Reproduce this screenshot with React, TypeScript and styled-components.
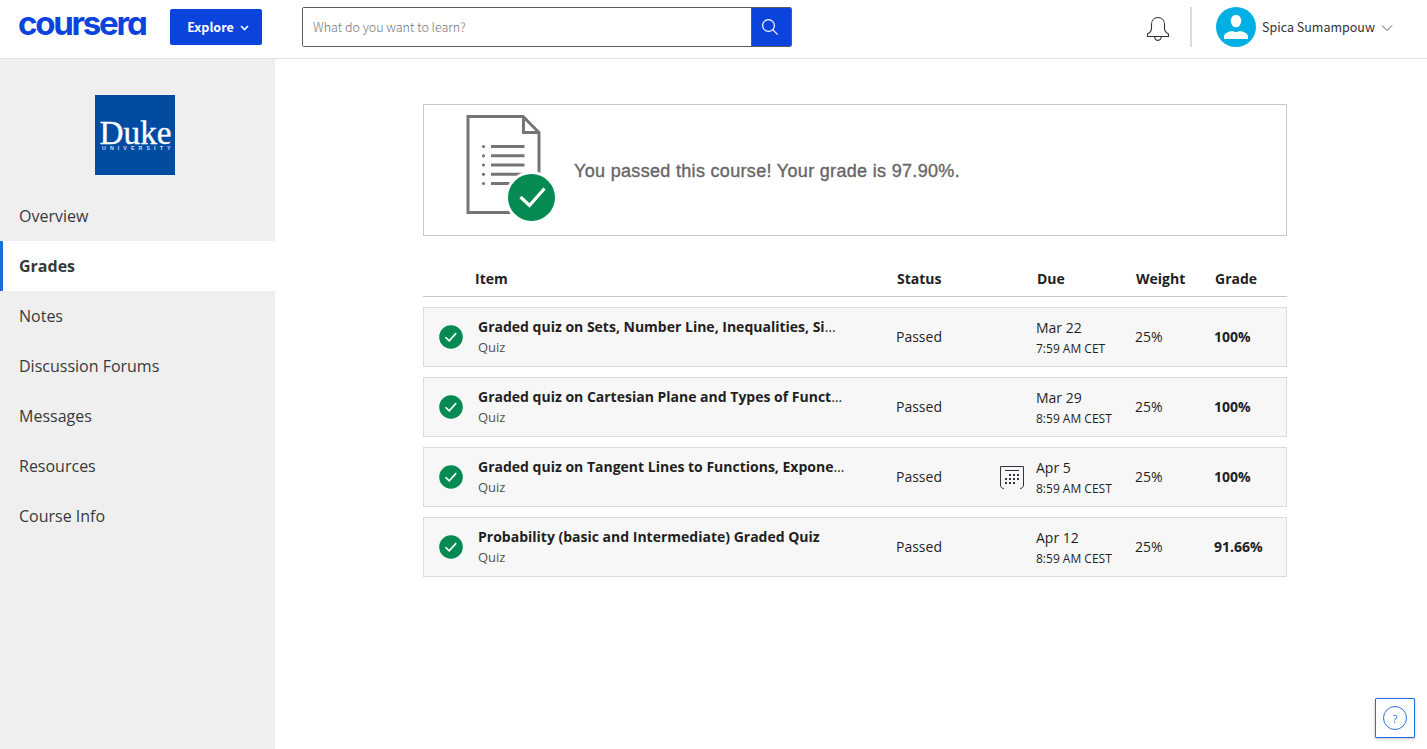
import React from "react";
import styled, { createGlobalStyle } from "styled-components";

const GlobalStyle = createGlobalStyle`
  * { box-sizing: border-box; }
  body {
    margin: 0;
    background: #fff;
    color: #1f1f1f;
    font-family: "Open Sans", "Noto Sans", sans-serif;
    font-size: 14px;
    overflow: hidden;
  }
  button { font: inherit; border: 0; padding: 0; cursor: pointer; }
`;

const sourceSans = `"Noto Sans CJK SC", "Open Sans", sans-serif`;

const Page = styled.div`
  display: flex;
  flex-direction: column;
  height: 749px;
`;

const TopBar = styled.header`
  display: flex;
  height: 59px;
  flex: none;
  border-bottom: 1px solid #e1e1e1;
  font-family: ${sourceSans};
`;

const Logo = styled.svg`
  flex: none;
  overflow: visible;
  text {
    font: 700 32.5px "Inter", sans-serif;
    font-feature-settings: "cv11" 1;
    letter-spacing: -2.2px;
    fill: #0a44dc;
  }
`;

const ExploreButton = styled.button`
  display: flex;
  align-items: center;
  justify-content: center;
  gap: 6px;
  width: 92px;
  height: 36px;
  margin: 9px 0 0 20px;
  padding: 0 0 1px 4px;
  border-radius: 2px;
  background: #0a44dc;
  color: #fff;
  font-size: 12.5px;
  font-weight: 700;
  svg { margin-top: 3px; }
`;

const SearchForm = styled.form`
  display: flex;
  width: 490px;
  height: 40px;
  margin: 7px 0 0 40px;
  border: 1px solid #5c5c5c;
  border-radius: 2px;
  overflow: hidden;
`;

const SearchInput = styled.input`
  flex: 1;
  min-width: 0;
  border: 0;
  outline: 0;
  padding: 0 10px 1px;
  font-family: ${sourceSans};
  font-size: 12.5px;
  font-weight: 300;
  &::placeholder { color: #757575; opacity: 1; }
`;

const SearchButton = styled.button`
  display: flex;
  align-items: center;
  justify-content: center;
  width: 40px;
  padding-right: 3px;
  border-left: 1px solid #5c5c5c;
  background: #0a44dc;
`;

const Account = styled.div`
  display: flex;
  align-items: flex-start;
  margin-left: auto;
  padding: 7px 34px 0 0;
`;

const Bell = styled.svg`
  margin: 9px 20px 0 0;
`;

const Divider = styled.div`
  width: 2px;
  height: 40px;
  margin-right: 24px;
  background: #dcdcdc;
`;

const UserName = styled.div`
  display: flex;
  align-items: center;
  gap: 6px;
  height: 39px;
  margin-left: 6px;
  font-size: 12.5px;
  color: #333;
  svg { margin-top: 2px; }
`;

const Body = styled.div`
  display: flex;
  flex: 1;
  min-height: 0;
`;

const Sidebar = styled.aside`
  display: flex;
  flex-direction: column;
  width: 275px;
  padding-top: 36px;
  background: #efefef;
`;

const SchoolLogo = styled.svg`
  margin: 0 0 16px 95px;
`;

const NavItem = styled.a<{ $active?: boolean }>`
  display: flex;
  align-items: center;
  height: 50px;
  padding-left: ${(p) => (p.$active ? 16 : 19)}px;
  border-left: ${(p) => (p.$active ? "3px solid #1a6bdc" : "0")};
  background: ${(p) => (p.$active ? "#fff" : "transparent")};
  color: #373a3c;
  font-size: 16px;
  font-weight: ${(p) => (p.$active ? 700 : 400)};
`;

const Main = styled.main`
  width: 864px;
  margin: 45px 0 0 148px;
`;

const Banner = styled.section`
  display: flex;
  height: 132px;
  border: 1px solid #c9c9c9;
`;

const BannerIcon = styled.svg`
  margin: 10px 18px 0 42px;
`;

const BannerText = styled.h1`
  margin: 0;
  padding-top: 55px;
  font: 400 18px/22px "Liberation Sans", sans-serif;
  letter-spacing: 0.32px;
  color: #666;
  -webkit-text-stroke: 0.35px #666;
`;

const TableHead = styled.div`
  display: grid;
  grid-template-columns: 52px 422px 105px 35px 99px 79px 1fr;
  align-items: center;
  height: 61px;
  padding-top: 25px;
  border-bottom: 1px solid #c9c9c9;
  font-weight: 700;
`;

const HeadCell = styled.div<{ $column: number }>`
  grid-column: ${(p) => p.$column};
`;

const Row = styled.div`
  display: grid;
  grid-template-columns: 15px 39px 418px 104px 36px 99px 79px 1fr;
  align-items: center;
  height: 60px;
  margin-top: 10px;
  border: 1px solid #dcdcdc;
  background: #f7f7f7;
`;

const Stack = styled.div`
  display: flex;
  flex-direction: column;
`;

const ItemTitle = styled.div`
  line-height: 20px;
  white-space: nowrap;
  b { font-weight: 700; }
`;

const ItemKind = styled.div`
  font-size: 13px;
  line-height: 20px;
  color: #525252;
`;

const DueDate = styled.div`
  padding-top: 3px;
  line-height: 20px;
`;

const DueTime = styled.div`
  padding-top: 1px;
  font-size: 12px;
  line-height: 20px;
`;

const DueIcon = styled.div`
  display: flex;
  padding-top: 1px;
`;

const Value = styled.div<{ $strong?: boolean }>`
  line-height: 20px;
  font-weight: ${(p) => (p.$strong ? 700 : 400)};
`;

const HelpButton = styled.button`
  position: fixed;
  right: 12px;
  bottom: 11px;
  display: flex;
  align-items: center;
  justify-content: center;
  width: 40px;
  height: 40px;
  border: 1px solid #1f6fe0;
  border-radius: 1px;
  background: #fff;
  box-shadow: 0 1px 3px rgba(0, 0, 0, 0.25);
`;

const HelpRing = styled.span`
  display: flex;
  align-items: center;
  justify-content: center;
  width: 24px;
  height: 24px;
  border: 1px solid #2a73e0;
  border-radius: 50%;
  color: #2a73e0;
  font-size: 11px;
  line-height: 1;
`;

const navItems = ["Overview", "Grades", "Notes", "Discussion Forums", "Messages", "Resources", "Course Info"];

const grades = [
  { title: "Graded quiz on Sets, Number Line, Inequalities, Si", cut: true, date: "Mar 22", time: "7:59 AM CET", grade: "100%" },
  { title: "Graded quiz on Cartesian Plane and Types of Funct", cut: true, date: "Mar 29", time: "8:59 AM CEST", grade: "100%" },
  { title: "Graded quiz on Tangent Lines to Functions, Expone", cut: true, date: "Apr 5", time: "8:59 AM CEST", grade: "100%", calendar: true },
  { title: "Probability (basic and Intermediate) Graded Quiz", date: "Apr 12", time: "8:59 AM CEST", grade: "91.66%" },
];

function PassedIcon() {
  return (
    <svg width="24" height="24" viewBox="0 0 24 24">
      <circle cx="12" cy="12" r="11.8" fill="#058a52" />
      <path d="M6.5 12.2l3.7 3.6 7-7.7" fill="none" stroke="#fff" strokeWidth="1.6" />
    </svg>
  );
}

function CalendarIcon() {
  const dots = [
    [9, 8], [13, 8], [17, 8],
    [5, 12], [9, 12], [13, 12], [17, 12],
    [5, 16], [9, 16], [13, 16],
  ];
  return (
    <svg width="24" height="24" viewBox="0 0 24 24" fill="none" stroke="#2e3440">
      <path d="M4 22.5C1.5 22.3.5 21 .5 19V.5h23V19c0 2-1 3.3-3.5 3.5" />
      <path d="M5 4.5h14" />
      {dots.map(([x, y]) => (
        <rect key={`${x}-${y}`} x={x} y={y} width="2" height="2" fill="#2e3440" stroke="none" />
      ))}
    </svg>
  );
}

export default function App() {
  return (
    <>
      <GlobalStyle />
      <Page>
        <TopBar>
          <Logo width="150" height="50">
            <text x="18" y="34.7" textLength="127.5" lengthAdjust="spacingAndGlyphs">coursera</text>
          </Logo>
          <ExploreButton>
            Explore
            <svg width="9" height="6" viewBox="0 0 9 6" fill="none" stroke="#fff" strokeWidth="1.6">
              <path d="M1 1l3.5 3.5L8 1" />
            </svg>
          </ExploreButton>
          <SearchForm>
            <SearchInput placeholder="What do you want to learn?" />
            <SearchButton type="button" aria-label="Search">
              <svg width="18" height="18" viewBox="0 0 18 18" fill="none" stroke="#fff" strokeWidth="1.2">
                <circle cx="7.5" cy="7.5" r="5.9" />
                <path d="M11.7 11.7l5 5" />
              </svg>
            </SearchButton>
          </SearchForm>
          <Account>
            <Bell width="24" height="26" viewBox="0 0 24 26" fill="none" stroke="#333" strokeWidth="1.1">
              <path d="M1.5 20.5v-2.5C4.8 16.5 5.5 15 5.5 12V8.5C5.5 4 8.5 1.5 12 1.5S18.5 4 18.5 8.5V12c0 3 .7 4.5 4 6v2.5z" />
              <path d="M8.7 20.5c0 5.2 6.6 5.2 6.6 0" />
            </Bell>
            <Divider />
            <svg width="40" height="40" viewBox="0 0 40 40">
              <circle cx="20" cy="20" r="20" fill="#00b0e4" />
              <ellipse cx="20" cy="14" rx="5.2" ry="6.3" fill="#fff" />
              <path d="M8 32v-2.5c0-3.5 5-5 8.5-5.500 2.3 1.3 4.7 1.3 7 0 3.5.5 8.5 2 8.5 5.5V32z" fill="#fff" />
            </svg>
            <UserName>
              Spica Sumampouw
              <svg width="12" height="8" viewBox="0 0 12 8" fill="none" stroke="#555">
                <path d="M1 1.5l5 5 5-5" />
              </svg>
            </UserName>
          </Account>
        </TopBar>
        <Body>
          <Sidebar>
            <SchoolLogo width="80" height="80" viewBox="0 0 80 80">
              <rect width="80" height="80" fill="#014ba1" />
              <text x="4.5" y="48.7" fill="#fff" stroke="#fff" strokeWidth="0.35" fontFamily="Liberation Serif, serif" fontSize="33.5" textLength="72" lengthAdjust="spacingAndGlyphs">Duke</text>
              <text x="7" y="55" fill="#cfdef0" fontFamily="Liberation Sans, sans-serif" fontSize="5.3" fontWeight="700" textLength="68.5">UNIVERSITY</text>
            </SchoolLogo>
            {navItems.map((item) => (
              <NavItem key={item} $active={item === "Grades"}>{item}</NavItem>
            ))}
          </Sidebar>
          <Main>
            <Banner>
              <BannerIcon width="90" height="108" viewBox="0 0 90 108">
                <path d="M2 1.5h55l16 16V97.5H2z" fill="none" stroke="#757575" strokeWidth="3" />
                <path d="M57.5 1.5V17.5h16" fill="none" stroke="#757575" strokeWidth="3" />
                {[31.5, 40.8, 50, 59.3, 68.5].map((y) => (
                  <g key={y}>
                    <circle cx="17.5" cy={y} r="1.6" fill="#757575" />
                    <path d={`M25 ${y}h33.5`} stroke="#757575" strokeWidth="3" />
                  </g>
                ))}
                <circle cx="65.5" cy="82.5" r="26.5" fill="#fff" />
                <circle cx="65.5" cy="82.5" r="23.5" fill="#058a52" />
                <path d="M54.5 82l9 8.5 15-17" fill="none" stroke="#fff" strokeWidth="3.2" />
              </BannerIcon>
              <BannerText>You passed this course! Your grade is 97.90%.</BannerText>
            </Banner>
            <TableHead>
              <HeadCell $column={2}>Item</HeadCell>
              <HeadCell $column={3}>Status</HeadCell>
              <HeadCell $column={5}>Due</HeadCell>
              <HeadCell $column={6}>Weight</HeadCell>
              <HeadCell $column={7}>Grade</HeadCell>
            </TableHead>
            {grades.map((g) => (
              <Row key={g.title}>
                <span />
                <PassedIcon />
                <Stack>
                  <ItemTitle><b>{g.title}</b>{g.cut && "…"}</ItemTitle>
                  <ItemKind>Quiz</ItemKind>
                </Stack>
                <Value>Passed</Value>
                <DueIcon>{g.calendar && <CalendarIcon />}</DueIcon>
                <Stack>
                  <DueDate>{g.date}</DueDate>
                  <DueTime>{g.time}</DueTime>
                </Stack>
                <Value>25%</Value>
                <Value $strong>{g.grade}</Value>
              </Row>
            ))}
          </Main>
        </Body>
        <HelpButton aria-label="Help"><HelpRing>?</HelpRing></HelpButton>
      </Page>
    </>
  );
}
